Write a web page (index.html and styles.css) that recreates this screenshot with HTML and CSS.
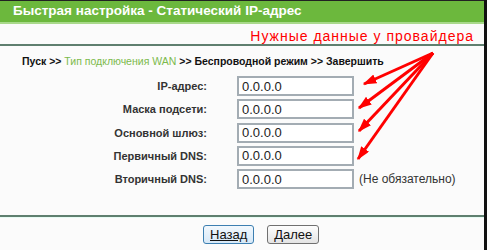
FILE: index.html
```html
<!DOCTYPE html>
<html lang="ru">
<head>
    <meta charset="UTF-8">
    <title>Быстрая настройка - Статический IP-адрес</title>
    <link rel="stylesheet" href="styles.css">
</head>
<body>

    <div class="page">
        <div class="title-bar">Быстрая настройка - Статический IP-адрес</div>

        <div class="note-row">
            <span class="note">Нужные данные у провайдера</span>
        </div>

        <div class="crumbs">
            <b>Пуск &gt;&gt;</b>
            <span class="crumb-active">Тип подключения WAN</span>
            <b>&gt;&gt; Беспроводной режим &gt;&gt; Завершить</b>
        </div>

        <div class="form-grid">
            <label class="field-label">IP-адрес:</label>
            <input class="ip-input" type="text" value="0.0.0.0">
            <span></span>

            <label class="field-label">Маска подсети:</label>
            <input class="ip-input" type="text" value="0.0.0.0">
            <span></span>

            <label class="field-label">Основной шлюз:</label>
            <input class="ip-input" type="text" value="0.0.0.0">
            <span></span>

            <label class="field-label">Первичный DNS:</label>
            <input class="ip-input" type="text" value="0.0.0.0">
            <span></span>

            <label class="field-label">Вторичный DNS:</label>
            <input class="ip-input" type="text" value="0.0.0.0">
            <span class="optional">(Не обязательно)</span>
        </div>

        <div class="button-row">
            <button class="btn btn-focus">Назад</button>
            <button class="btn">Далее</button>
        </div>

        <!-- red hint arrows drawn over the form -->
        <svg class="arrows" width="484" height="250" viewBox="0 0 484 250">
            <defs>
                <marker id="head" viewBox="0 0 10 7" refX="9" refY="3.5" markerWidth="4.6" markerHeight="3.2" orient="auto">
                    <path d="M0,0 L10,3.5 L0,7 z" fill="#f00"/>
                </marker>
            </defs>
            <g stroke="#f00" stroke-width="3" marker-end="url(#head)">
                <line x1="433" y1="53" x2="364" y2="84"/>
                <line x1="433" y1="53" x2="359" y2="108"/>
                <line x1="433" y1="53" x2="359" y2="131"/>
                <line x1="433" y1="53" x2="358" y2="159"/>
            </g>
        </svg>
    </div>

</body>
</html>
```

FILE: styles.css
```css
* {
    box-sizing: border-box;
    margin: 0;
    padding: 0;
}

body {
    background: #111;
    font-family: 'Liberation Sans', Arial, sans-serif;
    width: 487px;
    height: 250px;
    overflow: hidden;
}

.page {
    position: relative;
    width: 484px;
    height: 250px;
    background: #fbfbfb;
    border-top: 1px solid #222;
}

.title-bar {
    height: 23px;
    background: #6cb83d;
    border-bottom: 2px solid #a9d98b;
    color: #fff;
    font-size: 13.5px;
    font-weight: bold;
    line-height: 20px;
    padding-left: 13px;
}

.note-row {
    height: 22px;
    border-bottom: 2px solid #5f7f6f;
    text-align: right;
    padding-right: 10px;
}

.note {
    color: #f00;
    font-size: 14px;
    letter-spacing: 1px;
    line-height: 24px;
}

.crumbs {
    padding: 9px 0 0 22px;
    height: 30px;
    font-size: 10.5px;
    color: #111;
}

.crumbs b {
    font-weight: bold;
}

.crumb-active {
    color: #7cba4c;
}

.form-grid {
    display: grid;
    grid-template-columns: 207px 117px auto;
    grid-auto-rows: 20px;
    column-gap: 30px;
    row-gap: 3.3px;
    align-items: center;
}

.form-grid .optional {
    margin-left: -25px;
}

.field-label {
    text-align: right;
    font-size: 11px;
    font-weight: bold;
    color: #333;
}

.ip-input {
    width: 117px;
    height: 20px;
    border: 2px solid #a3acb3;
    background: #fff;
    font-family: 'Liberation Sans', Arial, sans-serif;
    font-size: 13px;
    color: #222;
    padding-left: 3px;
}

.optional {
    font-size: 12px;
    color: #333;
}

.button-row {
    margin-top: 26px;
    border-top: 2px solid #5f7f6f;
    box-shadow: inset 0 1px 0 #e6fbf3;
    display: flex;
    gap: 13px;
    padding: 8px 0 0 203px;
}

.btn {
    height: 19px;
    padding: 0 6px;
    font-family: 'Liberation Sans', Arial, sans-serif;
    font-size: 13px;
    color: #111;
    background: linear-gradient(#fdfdfd, #e4e4e4);
    border: 1px solid #707070;
    border-radius: 3px;
}

.btn-focus {
    border-color: #3c7fb1;
    background: linear-gradient(#f2f8fd, #d6e8f7);
    text-decoration: underline;
}

.arrows {
    position: absolute;
    top: -1px;
    left: 0;
}
```
